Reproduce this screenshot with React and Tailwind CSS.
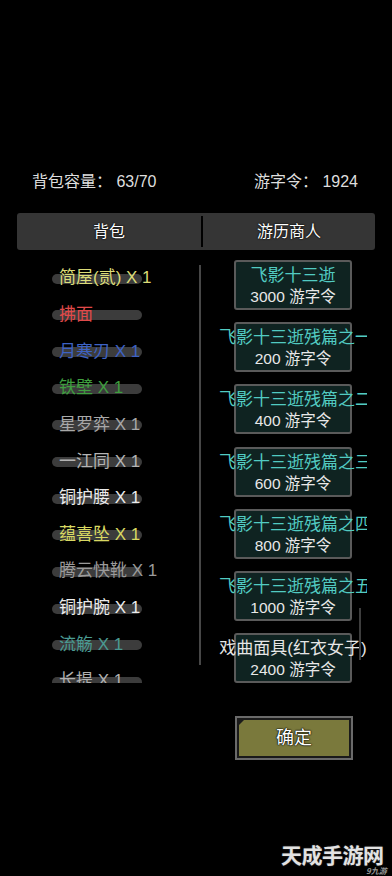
import React from "react";

const items = [
  { name: "简屋(贰) X 1", color: "text-[#dcdc78]" },
  { name: "拂面", color: "text-[#e04a4a]" },
  { name: "月寒刃 X 1", color: "text-[#3d62c4]" },
  { name: "铁壁 X 1", color: "text-[#3f9e3f]" },
  { name: "星罗弈 X 1", color: "text-[#a8a8a8]" },
  { name: "一江同 X 1", color: "text-[#b4b4b4]" },
  { name: "铜护腰 X 1", color: "text-[#ececec]" },
  { name: "蕴喜坠 X 1", color: "text-[#d8d862]" },
  { name: "腾云快靴 X 1", color: "text-[#9a9a9a]" },
  { name: "铜护腕 X 1", color: "text-[#ececec]" },
  { name: "流觞 X 1", color: "text-[#4a9a92]" },
  { name: "长提 X 1", color: "text-[#b0b0b0]" },
];

const goods = [
  { title: "飞影十三逝", price: "3000 游字令", teal: true },
  { title: "飞影十三逝残篇之一", price: "200 游字令", teal: true },
  { title: "飞影十三逝残篇之二", price: "400 游字令", teal: true },
  { title: "飞影十三逝残篇之三", price: "600 游字令", teal: true },
  { title: "飞影十三逝残篇之四", price: "800 游字令", teal: true },
  { title: "飞影十三逝残篇之五", price: "1000 游字令", teal: true },
  { title: "戏曲面具(红衣女子)", price: "2400 游字令", teal: false },
];

export default function App() {
  return (
    <div
      className="relative w-[392px] h-[876px] bg-black overflow-hidden flex flex-col"
      style={{ fontFamily: '"Liberation Sans", "Noto Sans CJK SC", sans-serif' }}
    >
      {/* header */}
      <div className="mt-[172px] h-[20px] flex justify-between pl-[32px] pr-[34px] text-[16px] leading-[20px] text-[#dedede]">
        <span>背包容量：&nbsp;63/70</span>
        <span>游字令：&nbsp;1924</span>
      </div>

      {/* tabs */}
      <div className="mt-[21px] mx-[17px] h-[37px] bg-[#353535] rounded-[3px] flex items-center text-[16px] text-white [text-shadow:0_0_2px_#000,0_0_1px_#000]">
        <div className="w-[184px] text-center">背包</div>
        <div className="w-[2px] h-[31px] bg-black"></div>
        <div className="flex-1 text-center">游历商人</div>
      </div>

      {/* content */}
      <div className="mt-[10px] h-[423px] flex overflow-hidden">
        <div className="w-[199px] pl-[52px] flex flex-col">
          {items.map((it, i) => (
            <div key={i} className="h-[36.65px] shrink-0 grid items-center">
              <div className="[grid-area:1/1] w-[90px] h-[10px] mt-[1px] rounded-full bg-[#3c3c3c]"></div>
              <div className={`[grid-area:1/1] pl-[7px] text-[17px] leading-[20px] whitespace-nowrap ${it.color}`}>
                {it.name}
              </div>
            </div>
          ))}
        </div>
        <div className="w-[2px] mt-[5px] h-[400px] bg-[#474747]"></div>
        <div className="relative w-[166px] flex flex-col gap-[12.2px] overflow-hidden">
          {goods.map((g, i) => (
            <div
              key={i}
              className="ml-[33px] w-[118px] h-[50px] shrink-0 border-2 border-[#5a5a5a] rounded-[3px] bg-[#0f2321] flex flex-col items-center"
            >
              <div
                className={`self-stretch -mx-[17px] pt-[4px] h-[24px] overflow-hidden whitespace-nowrap text-center text-[17px] leading-[20px] ${
                  g.teal ? "text-[#52cbc2]" : "text-[#e6e6e6]"
                }`}
              >
                {g.title}
              </div>
              <div className="mt-[2px] text-[15.5px] leading-[18px] text-[#e8e8e8] whitespace-nowrap">{g.price}</div>
            </div>
          ))}
          <div className="absolute left-[158px] top-[348px] w-[2px] h-[52px] bg-[#3e3e3e]"></div>
        </div>
      </div>

      {/* confirm button */}
      <div className="mt-[33px] ml-[235px] w-[118px] h-[44px] border-2 border-[#6a6a6a] bg-[#1a1a1a] p-[2px]">
        <div className="relative w-full h-full bg-[#7a793c] flex items-center justify-center text-[18px] text-white [text-shadow:0_0_2px_#000,0_0_1px_#000,0_0_1px_#000]">
          <div className="absolute left-0 top-0 w-0 h-0 border-t-[5px] border-t-[#1a1a1a] border-r-[5px] border-r-transparent"></div>
          确定
        </div>
      </div>

      {/* watermark */}
      <div className="absolute left-[281px] top-[841px] text-[21px] font-bold leading-[26px] tracking-[-0.5px] text-[#e2e2e2] [text-shadow:0_0_2px_#333,0_0_1px_#333]"
        style={{ fontFamily: '"Noto Sans CJK SC", sans-serif' }}>
        天成手游网
      </div>
      <div className="absolute left-[366px] top-[866px] text-[8px] leading-[10px] italic font-bold text-[#9a9a9a]"
        style={{ fontFamily: '"Noto Sans CJK SC", sans-serif' }}>
        9九游
      </div>
    </div>
  );
}
